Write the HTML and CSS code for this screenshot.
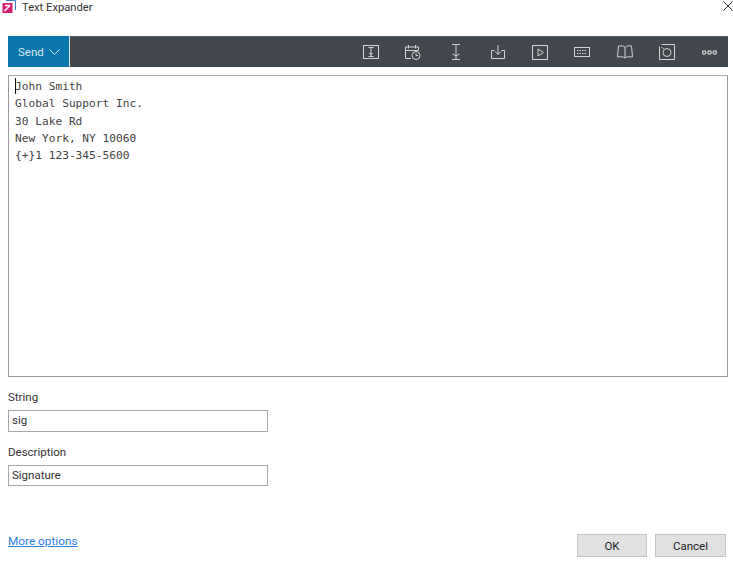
FILE: index.html
```html
<!DOCTYPE html>
<html lang="en">
<head>
<meta charset="utf-8">
<title>Text Expander</title>
<link rel="stylesheet" href="styles.css">
</head>
<body>
<div class="dialog">
  <header class="titlebar">
    <div class="title-left">
      <svg class="logo" width="14" height="14" viewBox="0 0 14 14">
        <path d="M4 0.5H13.5V10" fill="none" stroke="#3a7fc4" stroke-width="1"/>
        <rect x="0.500" y="3" width="10" height="10" fill="#d3206f"/>
        <path d="M2.500 11L8 5.500M3 5.500H8" fill="none" stroke="#fff" stroke-width="1.500"/>
      </svg>
      <span class="title-text">Text Expander</span>
    </div>
    <svg class="close" width="10" height="10" viewBox="0 0 10 10"><path d="M.5.5l9 9M9.500.5l-9 9" stroke="#333" stroke-width="1" fill="none"/></svg>
  </header>

  <div class="toolbar">
    <div class="send">Send
      <svg width="11" height="6" viewBox="0 0 11 6"><path d="M.5.5l5 5 5-5" fill="none" stroke="#d8e8f2" stroke-width="1"/></svg>
    </div>
    <div class="tools">
      <svg class="ic" width="16" height="14" viewBox="0 0 16 14"><rect x=".5" y=".5" width="15" height="13"/><path d="M8 2.500v9M5.500 2.500h5M5.500 11.500h5M6 8l2 1.500L10 8"/></svg>
      <svg class="ic" width="18" height="17" viewBox="0 0 18 17"><path d="M7 14.500H1.500V3h13V6.500M1.500 6.500h13M4.500 1v3.500M11.500 1v3.500"/><circle cx="12" cy="11.500" r="4"/><path d="M12 9.500v2h2"/></svg>
      <svg class="ic" width="10" height="16" viewBox="0 0 10 16"><path d="M5 1v14M1 .5h8M1 15.500h8M1.500 10L5 12l3.500-2"/></svg>
      <svg class="ic" width="16" height="16" viewBox="0 0 16 16"><path d="M4.500 6.500h-3v8h13v-8h-3M8 1v9M5 7.500L8 10.500l3-3"/></svg>
      <svg class="ic" width="16" height="15" viewBox="0 0 16 15"><rect x=".5" y=".5" width="15" height="14"/><path d="M6 4v7l5.500-3.500z"/></svg>
      <svg class="ic" width="16" height="10" viewBox="0 0 16 10"><rect x=".5" y=".5" width="15" height="9"/><path d="M3 3.500h10M3 6.500h10" stroke-dasharray="1.500 1"/></svg>
      <svg class="ic" width="16" height="14" viewBox="0 0 16 14"><path d="M8 2.500C6.500 .5 3.500 .5 1.500 1L.5 12c2.500-.5 6-.5 7.500 1 1.500-1.500 5-1.500 7.500-1L14.500 1C12.500 .5 9.500 .5 8 2.500zM8 2.500V13"/></svg>
      <svg class="ic" width="16" height="16" viewBox="0 0 16 16"><path d="M2.500.5h13v15H.5V2.500"/><circle cx="8" cy="8.500" r="4"/><path d="M2.500 3.500l2 1"/></svg>
      <svg class="ic dots" width="15" height="5" viewBox="0 0 15 5"><circle cx="2.200" cy="2.500" r="1.700"/><circle cx="7.500" cy="2.500" r="1.700"/><circle cx="12.800" cy="2.500" r="1.700"/></svg>
    </div>
  </div>

  <div class="editor"><span class="caret"></span>John Smith
Global Support Inc.
30 Lake Rd
New York, NY 10060
{+}1 123-345-5600</div>

  <div class="fields">
    <label class="label">String</label>
    <div class="input">sig</div>
    <label class="label second">Description</label>
    <div class="input">Signature</div>
  </div>

  <footer class="footer">
    <a class="more" href="#">More options</a>
    <div class="buttons">
      <button class="btn ok">OK</button>
      <button class="btn">Cancel</button>
    </div>
  </footer>
</div>
</body>
</html>
```
FILE: styles.css
```css
* { box-sizing: border-box; }
html, body { margin: 0; padding: 0; background: #fff; }
body { width: 733px; height: 562px; overflow: hidden; font-family: Roboto, "Noto Sans", sans-serif; font-size: 11.500px; color: #222; }
.dialog { display: flex; flex-direction: column; height: 562px; padding: 0 5px 0 8px; }
.titlebar { display: flex; justify-content: space-between; align-items: flex-start; height: 36px; margin-left: -6px; margin-right: -5px; }
.title-left { display: flex; align-items: flex-start; gap: 6px; }
.logo { display: block; }
.title-text { font-size: 11.200px; line-height: 15px; color: #333; }
.close { margin-top: 1px; }
.toolbar { display: flex; height: 31px; width: 720px; background: #41474d; border-top: 1px solid #555b60; }
.send { width: 62px; margin-top: -1px; height: 31px; background: #0a76ad; border-right: 1px solid #dfe7ec; color: #d8e8f2; display: flex; align-items: center; gap: 5px; padding-left: 10px; font-size: 11.500px; }
.tools { flex: 1; display: grid; grid-template-columns: repeat(9, 16px); column-gap: 26.250px; align-items: center; justify-items: center; padding-left: 293px; }
.tools .ic { fill: none; stroke: #cfd4d4; stroke-width: 1; }
.tools .dots { stroke-width: 1.200; }
.editor { position: relative; margin-top: 8px; width: 720px; height: 302px; border: 1px solid #9a9a9a; border-top-color: #aaa; padding: 2px 6px; font-family: "DejaVu Sans Mono", monospace; font-size: 11.200px; line-height: 17.300px; color: #444; white-space: pre; }
.caret { position: absolute; left: 5.500px; top: 2px; width: 1px; height: 16px; background: #111; }
.fields { display: flex; flex-direction: column; margin-top: 12px; }
.label { font-size: 11.500px; line-height: 16px; color: #333; }
.label.second { margin-top: 12px; }
.input { width: 260px; height: 22px; margin-top: 5px; border: 1px solid #a8a8a8; padding-left: 3px; line-height: 19px; font-size: 11.500px; color: #333; }
.label.second + .input { height: 21px; }
.footer { display: flex; justify-content: space-between; align-items: flex-end; margin-top: auto; padding-bottom: 5px; width: 718px; }
.more { color: #2a7de1; font-size: 11.800px; line-height: 16px; margin-bottom: 8px; text-decoration: underline; }
.buttons { display: flex; gap: 8px; }
.btn { width: 71px; height: 23px; padding: 0; background: #e1e1e1; border: 1px solid #c4c4c4; font: inherit; color: #222; }
.btn.ok { width: 70px; }
```
